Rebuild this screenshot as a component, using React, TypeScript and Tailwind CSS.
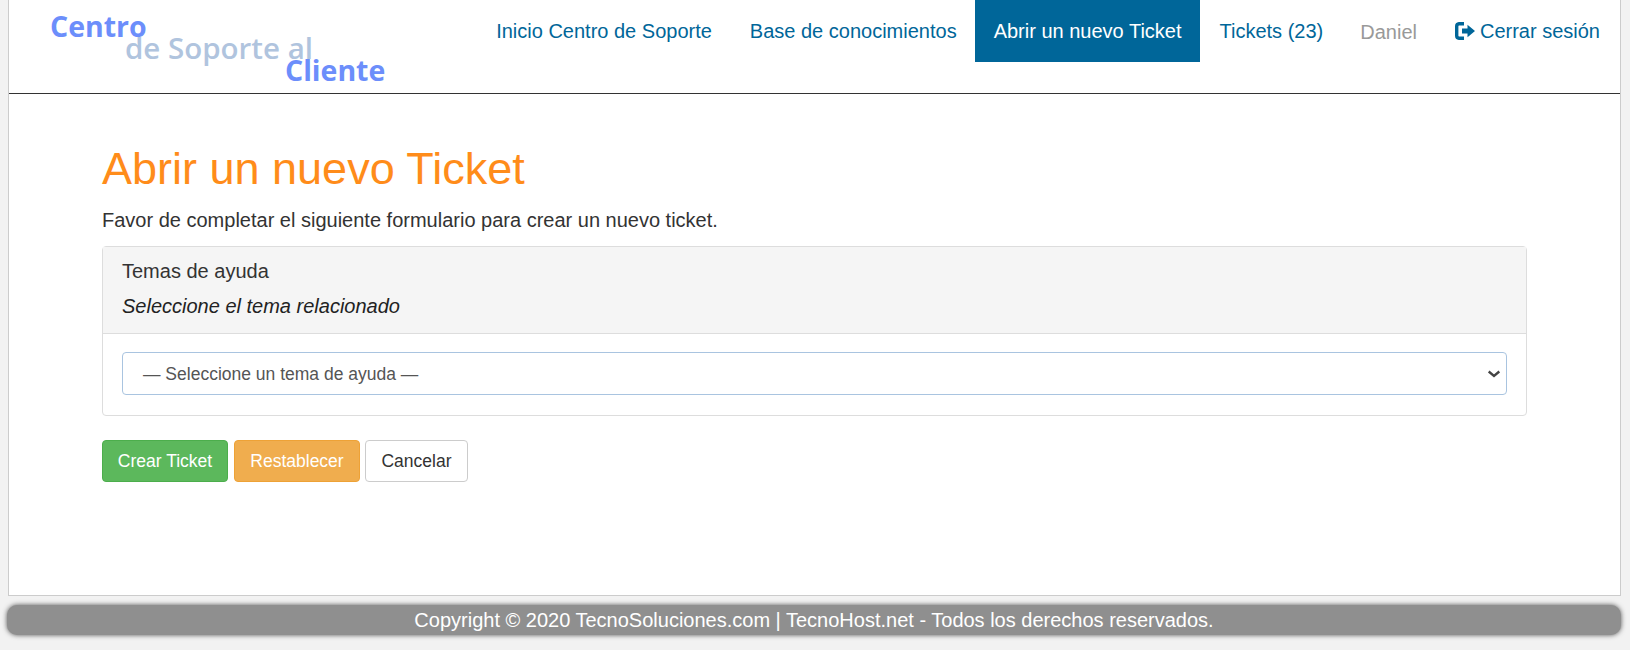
import React from "react";

const navLink = "flex h-[62px] items-center px-[19px] text-[20px] text-[#006699]";

export default function App() {
  return (
    <div className="h-[650px] w-[1630px] overflow-hidden bg-[#f2f2f2] font-['Liberation_Sans',Arial,sans-serif] text-[#333333]">
      <div className="mx-[8px] flex h-[596px] w-[1613px] flex-col border-x border-b border-[#cccccc] bg-white">
        <header className="flex h-[94px] shrink-0 items-start justify-between border-b border-[#333333] pr-[1px]">
          <div className="ml-[41px] flex w-[340px] flex-col font-['Open_Sans',sans-serif] text-[28.5px] font-bold leading-[32px]">
            <span className="mt-[10px] text-[#6c8efb]">Centro</span>
            <span className="relative ml-[75px] -mt-[10px] text-[29.5px] font-semibold text-[#b0c4de]">de Soporte al</span>
            <span className="relative ml-[235px] -mt-[10px] text-[#6c8efb]">Cliente</span>
          </div>
          <nav className="flex items-start">
            <a className={navLink}>Inicio Centro de Soporte</a>
            <a className={navLink + " pr-[18px]"}>Base de conocimientos</a>
            <a className={navLink + " bg-[#006699] pr-[18px] text-white"}>Abrir un nuevo Ticket</a>
            <a className={navLink + " pl-[20px]"}>Tickets (23)</a>
            <span className="flex h-[62px] items-center px-[18px] pt-[2px] text-[20px] text-[#999999]">Daniel</span>
            <a className={navLink + " gap-[4px] pl-[20px]"}>
              <svg width="21" height="18" viewBox="0 0 21 18" fill="none">
                <path d="M9 1.700H4A2.500 2.500 0 0 0 1.700 4.200v9.600A2.500 2.500 0 0 0 4 16.300H9" stroke="#006699" strokeWidth="3.400" />
                <path d="M7 6.500h5.500V2.800L20 9l-7.500 6.200v-3.700H7z" fill="#006699" />
              </svg>
              Cerrar sesión
            </a>
          </nav>
        </header>
        <main className="px-[93px] pt-[50px]">
          <h1 className="text-[45px] font-normal leading-[50px] text-[#ff8c1a]">Abrir un nuevo Ticket</h1>
          <p className="mt-[13px] text-[20px] leading-[26px]">Favor de completar el siguiente formulario para crear un nuevo ticket.</p>
          <section className="mt-[13px] w-[1425px] rounded-[4px] border border-[#dddddd]">
            <div className="h-[87px] border-b border-[#dddddd] bg-[#f5f5f5] px-[19px] pt-[11px]">
              <h3 className="text-[20px] leading-[26px]">Temas de ayuda</h3>
              <p className="mt-[9px] text-[20px] italic leading-[26px] text-[#222222]">Seleccione el tema relacionado</p>
            </div>
            <div className="px-[19px] pb-[20px] pt-[18px]">
              <div className="flex h-[43px] items-center justify-between rounded-[4px] border border-[#a9c4e0] pl-[20px] pr-[4px] text-[17.5px] text-[#555555]">
                <span className="pt-[2px]">— Seleccione un tema de ayuda —</span>
                <svg width="16" height="10" viewBox="0 0 16 10" fill="none">
                  <path d="M2.700 2.500l5.300 4.500 5.300-4.500" stroke="#444444" strokeWidth="2.300" />
                </svg>
              </div>
            </div>
          </section>
          <div className="mt-[24px] flex gap-[5px] text-[17.5px]">
            <button className="h-[42px] w-[126px] rounded-[4px] border border-[#4cae4c] bg-[#5cb85c] text-white">Crear Ticket</button>
            <button className="ml-[1px] h-[42px] w-[126px] rounded-[4px] border border-[#eea236] bg-[#f0ad4e] text-white">Restablecer</button>
            <button className="h-[42px] w-[103px] rounded-[4px] border border-[#cccccc] bg-white text-[#333333]">Cancelar</button>
          </div>
        </main>
      </div>
      <footer className="ml-[7px] mt-[9px] flex h-[30px] w-[1614px] items-center justify-center rounded-[10px] bg-[#8f8f8f] text-[20px] text-white shadow-[0_0_5px_#555555]">
        Copyright © 2020 TecnoSoluciones.com | TecnoHost.net - Todos los derechos reservados.
      </footer>
    </div>
  );
}
